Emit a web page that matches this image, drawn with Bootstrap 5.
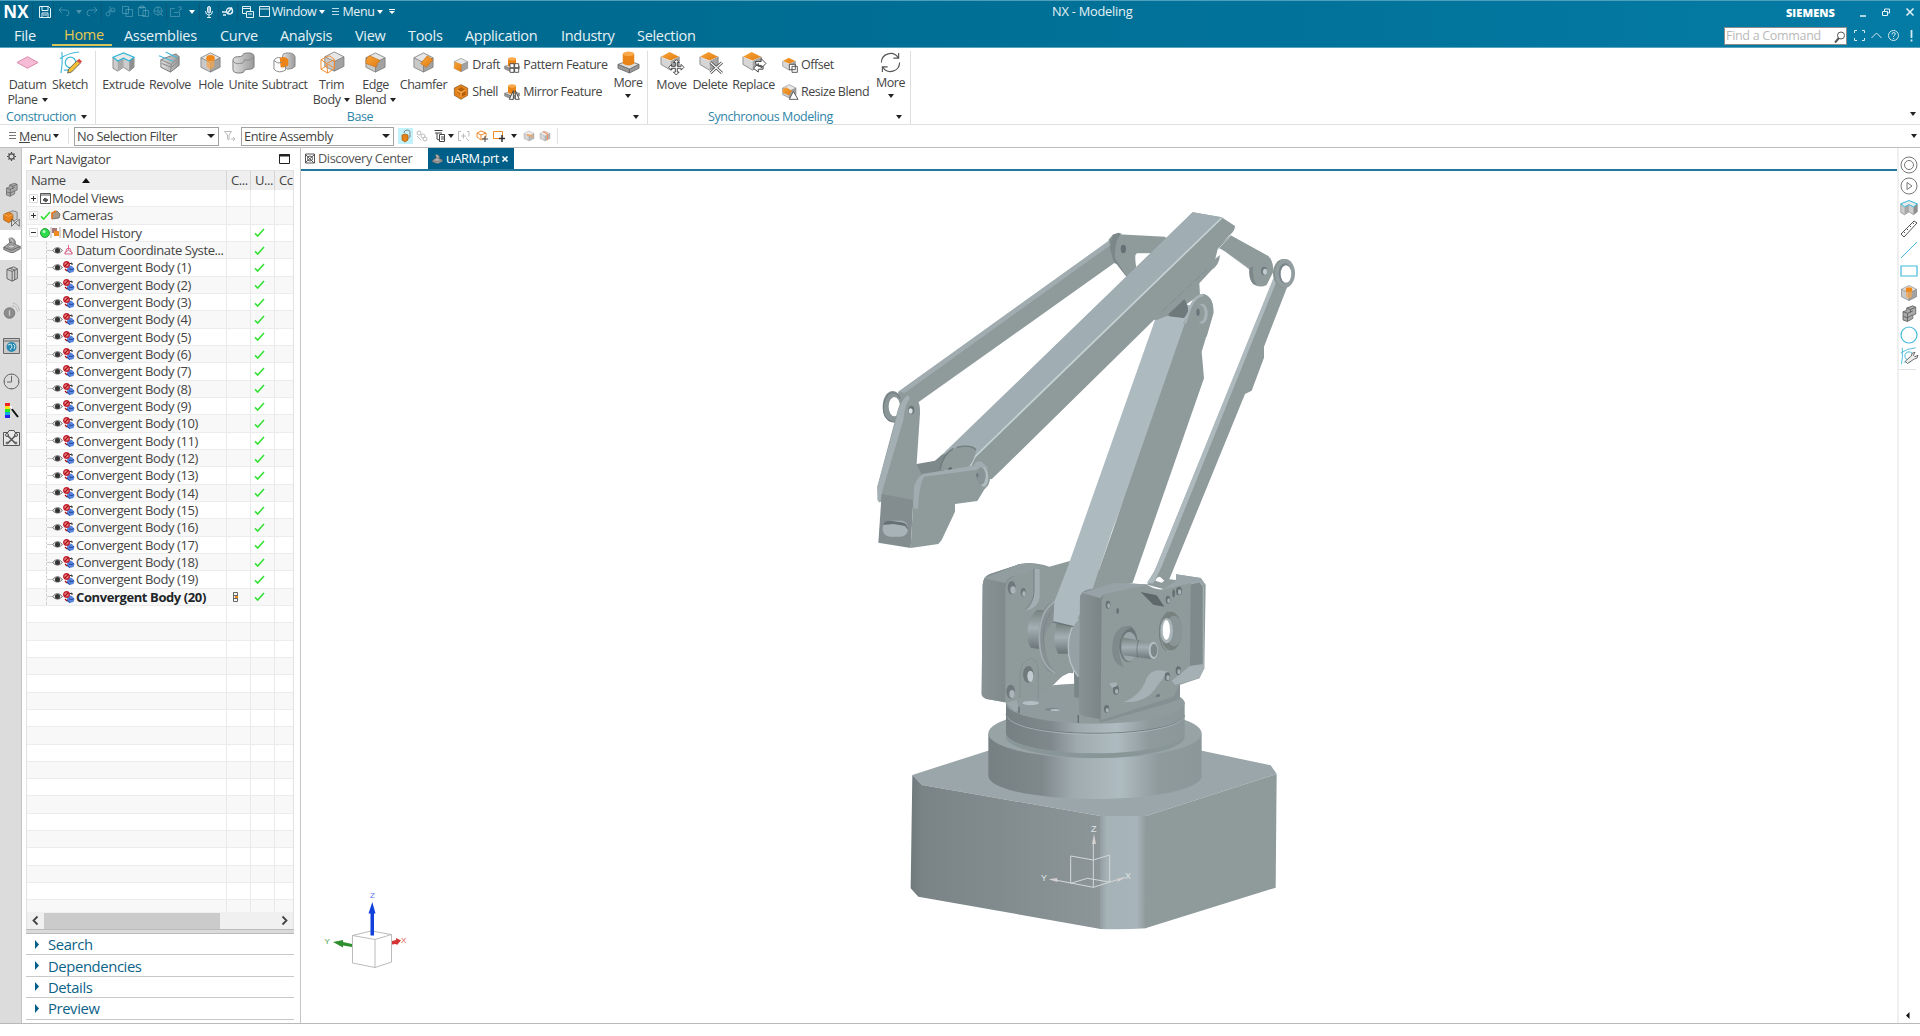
<!DOCTYPE html>
<html lang="en">
<head>
<meta charset="utf-8">
<title>NX - Modeling</title>
<link href="https://cdn.jsdelivr.net/npm/bootstrap@5.3.0/dist/css/bootstrap.min.css" rel="stylesheet">
<style>
html,body{height:100%}
body{font-family:"Open Sans","Noto Sans",sans-serif;font-size:12.5px;letter-spacing:-.42px;line-height:15px;color:#444;background:#fff;overflow:hidden}
svg{display:block;flex:none;overflow:visible}
.nowrap{white-space:nowrap}
.dd{width:0;height:0;border:3px solid transparent;border-top:4px solid #222;border-bottom:0;flex:none}
.titlebar .dd{border-top-color:#fff}
.topzone{height:48px;background:linear-gradient(90deg,#00658b,#006e94 45%,#047ba5);border-top:1px solid #4d9fbc;border-bottom:1px solid #5ba4bd;color:#e6f2f6}
.titlebar{height:21px}
.quick{display:grid;grid-template-columns:33px 21px 20px 9px 19px 17px 16px 16px 16px 18px 15px 19px 19px 19px 15px 44px 12px 15px 31px 12px 12px;height:21px;align-items:center;justify-items:center}
.quick .edge{border-right:1px solid #0b5a7b}
.quick>*{height:18px;width:100%;display:flex;align-items:center;justify-content:center}
.quick>.faded>*{opacity:.3}
.brand{font:bold 17px/18px "Open Sans",sans-serif;color:#fff;letter-spacing:.2px}
.wtitle{width:760px;padding-left:654px;font-size:12.8px;letter-spacing:-.22px}
.siemens{font:800 11px/14px "Open Sans",sans-serif;letter-spacing:.1px;color:#fff;margin-right:25px;padding-top:2px}
.ribtabs{height:25px;padding-top:2px;font-size:14.5px;line-height:23px;letter-spacing:-.3px;padding-left:2px}
.ribtabs a{color:#e6f2f6;text-decoration:none;padding-left:12px;height:22px;white-space:nowrap}
.ribtabs a.current{color:#e8c94f;border-bottom:2px solid #d9c55c;line-height:22px}
.t50{width:50px}.t60{width:60px}.t96{width:96px}.t75{width:75px}.t53{width:53px}.t57{width:57px}.t76{width:76px}
.finder{width:123px;height:18px;background:#fff;border:1px solid #8d8d8d;color:#b9b9b9;padding:0 1px;line-height:15px;font-size:12.5px;letter-spacing:-.3px;white-space:nowrap}
.ribbon{height:77px;border-bottom:1px solid #e0e0e0}
.rgroup{height:73px;margin-top:3px;border-right:1px solid #dedede}
.g1{width:96px;padding-left:6px}.g2{width:552px;padding-left:5px}.g3{width:263px;padding-left:5px}
.gfoot{height:17px;color:#2f85a8;line-height:16px}
.gbody{height:57px}
.big{display:flex;flex-direction:column;align-items:center;text-align:center;white-space:nowrap;line-height:15px}
.big svg{width:23px;height:23px;margin-bottom:3px}
.big.more svg{margin-bottom:1px}
.w31{width:31px}.w34{width:34px}.w37{width:37px}.w38{width:38px}.w40{width:40px}.w42{width:42px}.w43{width:43px}.w45{width:45px}.w46{width:46px}.w47{width:47px}.w48{width:48px}.w50{width:50px}.w52{width:52px}
.mini{display:flex;align-items:center;height:27px;gap:3px;white-space:nowrap;letter-spacing:-.45px}
.mini svg{width:16px;height:16px}
.c1{width:52px;margin-left:5px}.c2{width:105px;margin-left:-1px}.c3{width:91px;margin-left:5px;margin-right:-1px}
.basecap{padding-right:14px}.synccap{padding-right:8px}
.selbar{height:23px;border-bottom:1px solid #bdbdbd;display:grid;grid-template-columns:5px 15px 30px 12px 12px 145px 22px 153px 4px 15px 18px 17px 6px 20px 17px 16px 13px 17px 16px 5px 1fr 13px;align-items:center;justify-items:center}
.combo{border:1px solid #a2a2a2;height:19px;width:100%;display:flex;align-items:center;justify-content:space-between;padding:0 3px 0 2px;line-height:16px;font-size:12.8px}
.combo .dd{border-width:4px 4px 0}
.work{height:876px;border-bottom:1px solid #b9b9b9}
.rail{width:22px;background:#dcdcdc;border-right:1px solid #c4c4c4;flex:none}
.rail>div{display:flex;align-items:center;justify-content:center;padding-left:2px}
.h17{height:17px}.h41{height:41px}.h30{height:30px}.h28{height:28px}.h46{height:46px}.h24{height:24px}.h13{height:13px}.h42{height:42px}
.navpane{width:279px;border-right:1px solid #c6c6c6;padding-left:4px;flex:none}
.navhead{height:22px;font-size:13px;padding-left:3px;width:268px}
.treebox{width:268px;border:1px solid #e2e2e2;border-bottom:0}
.trow,.thead2{display:grid;grid-template-columns:200px 24px 24px 1fr}
.thead2{height:19px;background:#efefef;line-height:19px;font-size:13px}
.thead2>*{border-right:1px solid #d6d6d6;padding-left:4px;white-space:nowrap;overflow:hidden}
.treescroll{height:722px;overflow:hidden}
.trow{height:17.333px;border-bottom:1px solid #ececec;line-height:16px;font-size:13px;letter-spacing:-.4px}
.trow:nth-child(even){background:#f8f8f8}
.trow>*{border-right:1px solid #e9e9e9;display:flex;align-items:center;justify-content:center;white-space:nowrap;overflow:hidden;padding-right:6px}
.trow>:last-child,.thead2>:last-child{border-right:0}
.trow>.nm{justify-content:flex-start;padding-right:0}
.nm.lv1{padding-left:2px}
.nm.lv2{margin-left:19px;border-left:1px dashed #d0d0d0}
.gap3{margin-right:3px}.gap2{margin-right:2px}.gap1{margin-right:1px}
.bar{height:17px;background:#f0f0f0}
.thumb{width:176px;height:16px;background:#cbcbcb}
.splitter{height:5px;width:268px;background:#dadada;border-top:1px solid #bbb;border-bottom:1px solid #bbb}
.fold{width:268px;height:21.4px;border-bottom:1px solid #c9c9c9;color:#0b6388;font-size:14.8px;letter-spacing:-.38px;padding-left:9px;line-height:20px}
.fold svg{margin-right:9px}
.stage{width:1596px;flex:none}
.doctabs{height:23px;border-bottom:2px solid #24789c;color:#555;font-size:12.8px}
.dt1{width:127px;padding-left:4px}.dt2{width:86px;background:#005f88;color:#fff;padding:0 4px;height:21px}
.dt1,.dt2{gap:3px}
.tools{width:23px;border-left:2px solid #f0f0f0;flex:none}
.tools svg{width:18px;height:18px;margin:0 0 3.25px 1px}
</style>
</head>
<body>
<svg width="0" height="0" class="position-absolute">
<defs>
<linearGradient id="gm" x1="0" x2="1"><stop offset="0" stop-color="#dedede"/><stop offset="1" stop-color="#9a9a9a"/></linearGradient>
<linearGradient id="or" x1="0" y1="0" x2="1" y2="1"><stop offset="0" stop-color="#f9a53a"/><stop offset="1" stop-color="#e07c12"/></linearGradient>
<symbol id="cube" viewBox="0 0 24 24"><path d="M12 2 22 7 12 12 2 7z" fill="#e6e6e6"/><path d="M2 7 12 12V22L2 17z" fill="#c9c9c9"/><path d="M22 7 12 12V22l10-5z" fill="#a2a2a2"/><path d="M12 2 22 7V17L12 22 2 17V7zM2 7l10 5 10-5M12 12v10" fill="none" stroke="#777" stroke-width=".8"/></symbol>
<symbol id="ext" viewBox="0 0 24 24"><path d="M1 7v11l5 3 6-4 6 4 5-4V7z" fill="#cdcdcd" stroke="#777" stroke-width=".8"/><path d="M6 10v11l6-4V8z" fill="#a9a9a9"/><path d="M18 10v11l5-4V7z" fill="#8f8f8f"/><path d="M1 6.500 12 2l11 4.500-5 4-6-3-6 3z" fill="#e9e9e9" stroke="#2fb6d6" stroke-width="1.300"/></symbol>
<symbol id="hole" viewBox="0 0 24 24"><use href="#cube"/><path d="M8 7.500v9l4 3 4-3v-9z" fill="#f2a553" opacity=".75"/><ellipse cx="12" cy="7.500" rx="4.500" ry="3.200" fill="#ef8a1a"/></symbol>
<symbol id="otop" viewBox="0 0 24 24"><path d="M10 1 20 6 11 10 1 6z" fill="url(#or)"/><path d="M1 6 11 10.500V20L1 14z" fill="#d6d6d6"/><path d="M20 6 11 10.500V20l9-5z" fill="#a5a5a5"/><path d="M1 6v8l10 6 9-5V6" fill="none" stroke="#777" stroke-width=".8"/></symbol>
<symbol id="part" viewBox="0 0 24 24"><path d="M9 4l8-3 4 2v9l-4 2v4l-7 4-6-2V9l5-2z" fill="#aaa" stroke="#555"/><path d="M4 9l6 2 7-3M10 11v11M9 4l5 2 7-3M14 6v4M4 15l6 2 7-4" fill="none" stroke="#555"/></symbol>
<symbol id="eye" viewBox="0 0 12 10"><path d="M.5 5Q6-1.500 11.500 5 6 11 .5 5z" fill="#eee" stroke="#555" stroke-width=".9"/><circle cx="6" cy="5" r="2.800" fill="#333"/></symbol>
<symbol id="body" viewBox="0 0 12 12"><path d="M5 4l4 1 2.500 3-1 3-4 1-3-2z" fill="#5b86de"/><path d="M6 8l3 .5 2-1M4 9l3 2.500" stroke="#24479b" fill="none"/><path d="M6 3l3-1v2" stroke="#222" fill="none"/><circle cx="3.500" cy="3.500" r="2.800" fill="#e88" stroke="#c22333" stroke-width="1.400"/><path d="M1.500 5.500l4-4M2 8l2 2" stroke="#a11" stroke-width="1.200"/></symbol>
<symbol id="tick" viewBox="0 0 12 10"><path d="M1 6l3 3L11 1" fill="none" stroke="#35e035" stroke-width="1.700"/></symbol>
<symbol id="clam" viewBox="0 0 24 24"><path d="M1 15 9 9 8 3q5-2 8 3 1 3 0 5l7 3v3l-9 5h-4L1 18z" fill="#a3a3a3" stroke="#555"/><path d="M1 15l10 4 12-5M9 9q3-2 5 0t2 2" stroke="#555" fill="none"/><path d="M8 3q4 0 5 6" stroke="#ddd" fill="none"/><ellipse cx="11" cy="14" rx="4" ry="2" fill="#ccc" stroke="#666" stroke-width=".7"/></symbol>
<symbol id="sk" viewBox="0 0 24 24"><path d="M3 1q1 12-1 22M1 8Q9 2 21 1M5 20h9" fill="none" stroke="#43b9da" stroke-width="1.200"/><circle cx="12" cy="12" r="5.500" fill="none" stroke="#43b9da" stroke-width="1.300"/></symbol>
<symbol id="boss" viewBox="0 0 24 24"><path d="M1 14l11-4 11 4-10 5z" fill="#ddd" stroke="#666" stroke-width=".8"/><path d="M1 14v4l12 5v-4zM23 14v4l-10 5v-4z" fill="#999" stroke="#666" stroke-width=".8"/><path d="M6 3v10q6 4 12 0V3z" fill="#e98418"/><ellipse cx="12" cy="3" rx="6" ry="2.500" fill="#f9a94a"/></symbol>
</defs>
</svg>

<header class="topzone">
  <div class="titlebar d-flex align-items-center">
    <div class="quick">
      <div class="edge brand">NX</div>
      <div class="edge ps-1"><svg width="12" height="12" viewBox="0 0 12 12" fill="none" stroke="#e6f2f6"><path d="M.5.5h9l2 2v9H.5zM3 .5v4h6v-4M3 11V7h6v4M4 9h4"/></svg></div>
      <div class="faded"><svg width="12" height="11" viewBox="0 0 12 11" fill="none" stroke="#bfe3ef"><path d="M4 1 1 4l3 3M1 4h7q3 0 3 3t-3 3"/></svg></div>
      <div class="faded"><i class="dd"></i></div>
      <div class="edge faded"><svg width="12" height="11" viewBox="0 0 12 11" fill="none" stroke="#bfe3ef"><path d="M8 1l3 3-3 3M11 4H4Q1 4 1 7t3 3"/></svg></div>
      <div class="faded"><svg width="11" height="11" viewBox="0 0 11 11" fill="none" stroke="#bfe3ef"><path d="M5 0v7M10 5H3"/><circle cx="3" cy="8" r="2"/><circle cx="8" cy="4" r="2"/></svg></div>
      <div class="faded"><svg width="11" height="11" viewBox="0 0 11 11" fill="none" stroke="#bfe3ef"><path d="M.5.5h6v7h-6zM4 3.500h6.500v7H4z"/></svg></div>
      <div class="faded"><svg width="11" height="11" viewBox="0 0 11 11" fill="none" stroke="#bfe3ef"><path d="M.5 1.500h7v8h-7zM2 0h4v2H2zM5 4.500h5.500v6H5z"/></svg></div>
      <div class="edge faded"><svg width="11" height="11" viewBox="0 0 11 11" fill="none" stroke="#bfe3ef"><circle cx="5" cy="5" r="4"/><path d="M5 0v10M0 5h10M6 6l4 4"/></svg></div>
      <div class="faded"><svg width="12" height="11" viewBox="0 0 12 11" fill="none" stroke="#bfe3ef"><path d="M5 2.500H.5v8h9V6M4 6.500h4l3-4M8 1h3v3"/></svg></div>
      <div class="edge"><i class="dd"></i></div>
      <div class="edge"><svg width="8" height="12" viewBox="0 0 8 12" fill="none" stroke="#e6f2f6"><rect x="2.500" y=".5" width="3" height="6.500" rx="1.500" fill="#9bd"/><path d="M.5 5q0 4 3.500 4t3.500-4M4 9v2.500M2 11.500h4"/></svg></div>
      <div class="edge"><svg width="12" height="9" viewBox="0 0 12 9" fill="none" stroke="#e6f2f6" stroke-width="1.300"><path d="M0 5h5M1 8h3"/><circle cx="7.500" cy="4" r="3"/><path d="M5.500 6 10 .5M9 6.500l2-2"/></svg></div>
      <div><svg width="12" height="12" viewBox="0 0 12 12" fill="none" stroke="#e6f2f6"><path d="M.5.5h8v7h-8zM.5 2.500h8"/><path d="M4.500 5.500h7v6h-7zM6 8h4" fill="#006990"/></svg></div>
      <div><svg width="11" height="11" viewBox="0 0 11 11" fill="none" stroke="#e6f2f6"><path d="M.5.5h10v10H.5zM.5 3h10"/></svg></div>
      <div>Window</div><div><i class="dd"></i></div>
      <div><svg width="7" height="8" viewBox="0 0 7 8" stroke="#b9dbe6"><path d="M0 .5h7M0 3.500h7M0 6.500h7"/></svg></div>
      <div>Menu</div><div><i class="dd"></i></div>
      <div><svg width="6" height="6" viewBox="0 0 6 6"><path d="M0 .5h6" stroke="#fff"/><path d="M0 2h6L3 5z" fill="#fff"/></svg></div>
    </div>
    <div class="wtitle nowrap">NX - Modeling</div>
    <div class="ms-auto d-flex align-items-center">
      <span class="siemens">SIEMENS</span>
      <svg width="60" height="12" viewBox="0 0 60 12" fill="none" stroke="#e8f4f8"><path d="M0 10h6" stroke-width="1.500"/><path d="M22.500 5.500h5v4h-5zM24.500 5V3h5v4H28"/><path d="M46.500 2.500l7 7M53.500 2.500l-7 7" stroke-width="1.500"/></svg>
    </div>
  </div>
  <nav class="ribtabs d-flex">
    <a class="t50">File</a><a class="t60 current">Home</a><a class="t96">Assemblies</a><a class="t60">Curve</a><a class="t75">Analysis</a><a class="t53">View</a><a class="t57">Tools</a><a class="t96">Application</a><a class="t76">Industry</a><a>Selection</a>
    <div class="ms-auto d-flex align-items-center">
      <div class="finder d-flex justify-content-between me-2"><span>Find a Command</span><svg width="11" height="12" viewBox="0 0 11 12" fill="none" stroke="#555" class="mt-1"><circle cx="7" cy="3.500" r="3.500"/><path d="M5 6 1 10.500" stroke-width="2"/></svg></div>
      <svg width="65" height="13" viewBox="0 0 65 13" fill="none" stroke="#d5eaf1"><path d="M-.5 4V1.500H2M7 1.500h2.500V4M9.500 9v2.500H7M2 11.500H-.5V9M16.500 9l5-5 5 5"/><circle cx="38.500" cy="6.500" r="5"/><path d="M37 5.500q0-2 1.700-2T40.200 5q0 1-1.600 2v1M38.600 9v1"/><path d="M56.500 1v8M56.500 10.500v2" stroke-width="1.800"/></svg>
    </div>
  </nav>
</header>

<section class="ribbon d-flex">
  <div class="rgroup g1">
    <div class="gbody d-flex">
      <div class="big w43"><svg viewBox="0 0 24 24"><path d="M1 12 12 6l11 6-11 6z" fill="#f6bcd6" stroke="#d887aa"/></svg>Datum<span class="d-flex align-items-center gap-1">Plane<i class="dd"></i></span></div>
      <div class="big w42"><svg viewBox="0 0 24 24"><use href="#sk"/><path d="M9 23l1-4 9-9 3 3-9 9z" fill="#f3c137" stroke="#444" stroke-width=".8"/><path d="M19 10l2-2 3 3-2 2z" fill="#d44"/></svg>Sketch</div>
    </div>
    <div class="gfoot d-flex align-items-center justify-content-between pe-2"><span>Construction</span><i class="dd"></i></div>
  </div>
  <div class="rgroup g2">
    <div class="gbody d-flex">
      <div class="big w45"><svg viewBox="0 0 24 24"><use href="#ext"/></svg>Extrude</div>
      <div class="big w48"><svg viewBox="0 0 24 24"><path d="M3 9 19 3l3 3v9l-9 7-10-5z" fill="url(#gm)" stroke="#777"/><path d="M3 9l11 5 8-8M14 14l-1 8M4 13l10 4 8-7" stroke="#888" fill="none"/><path d="M1 5l15 6M8 1l12 6" stroke="#43b9da" stroke-width="1.200"/></svg>Revolve</div>
      <div class="big w34"><svg viewBox="0 0 24 24"><use href="#hole"/></svg>Hole</div>
      <div class="big w31"><svg viewBox="0 0 24 24"><path d="M1 10q0-4 5-4 3 0 5-1 0-3 6-3t6 4v10q0 3-5 3-4 0-5 1 0 3-6 3t-6-4z" fill="url(#gm)" stroke="#777"/><path d="M1 10q2 4 7 3 5 0 5-4 6 2 10-3" fill="none" stroke="#888"/></svg>Unite</div>
      <div class="big w52"><svg viewBox="0 0 24 24"><path d="M10 5q0-3 6-3t7 4v10q-2 3-8 3l-5-5z" fill="url(#gm)" stroke="#888"/><path d="M7 7q7-2 9 2v6q-4 3-8 2z" fill="#ec8418"/><path d="M1 10v9q5 5 12 1v-5M1 10q2-4 7-3M1 10q4 4 8 2" fill="none" stroke="#888"/></svg>Subtract</div>
      <div class="big w42"><svg viewBox="0 0 24 24"><use href="#cube" x="3" y="-1"/><path d="M1 9l9-4 5 4-8 4zM1 9v10l7 4 7-5V9M7 13l1 10M1 19l8-5 6 4" fill="none" stroke="#f08a2c"/></svg>Trim<span class="d-flex align-items-center gap-1">Body<i class="dd"></i></span></div>
      <div class="big w46"><svg viewBox="0 0 24 24"><use href="#cube"/><path d="M2 10q1-4 4-5l11 5q-4 2-4 7L2 13z" fill="url(#or)" stroke="#c06a10" stroke-width=".6"/></svg>Edge<span class="d-flex align-items-center gap-1">Blend<i class="dd"></i></span></div>
      <div class="big w50"><svg viewBox="0 0 24 24"><use href="#cube"/><path d="M16 5l6 4-7 8-6-4z" fill="url(#or)" stroke="#c06a10" stroke-width=".6"/></svg>Chamfer</div>
      <div class="c1">
        <div class="mini"><svg viewBox="0 0 24 24"><use href="#cube"/><path d="M3 7l10 4-1 11L1 17z" fill="url(#or)"/></svg>Draft</div>
        <div class="mini"><svg viewBox="0 0 24 24"><path d="M12 1l10 5v11l-10 6L2 17V6z" fill="#e58219" stroke="#7a5020"/><path d="M6 9l6-4 7 4v7l-7 3z" fill="#b55f0c"/><path d="M6 9l6 4 7-4M12 13v6" stroke="#f9b04f" fill="none" stroke-width="2"/></svg>Shell</div>
      </div>
      <div class="c2">
        <div class="mini"><svg viewBox="0 0 24 24"><use href="#boss"/><path d="M9 10h6v6H9zM16 10h6v6h-6zM9 17h6v6H9zM16 17h6v6h-6z" fill="#fff" stroke="#444" stroke-width="1.300"/></svg>Pattern Feature</div>
        <div class="mini"><svg viewBox="0 0 24 24"><use href="#boss"/><path d="M14 10v13H8zM17 10v13h6z" fill="#fff" stroke="#444" stroke-width="1.400"/></svg>Mirror Feature</div>
      </div>
      <div class="big more w38"><svg viewBox="0 0 24 24"><use href="#boss"/></svg>More<i class="dd mt-1"></i></div>
    </div>
    <div class="gfoot d-flex align-items-center"><span class="flex-fill text-center basecap">Base</span><i class="dd me-2"></i></div>
  </div>
  <div class="rgroup g3">
    <div class="gbody d-flex">
      <div class="big w37"><svg viewBox="0 0 24 24"><use href="#otop"/><path d="M17 9l3 3h-2v4h4v-2l3 3-3 3v-2h-4v4h2l-3 3-3-3h2v-4h-4v2l-3-3 3-3v2h4v-4h-2z" fill="#fff" stroke="#444"/></svg>Move</div>
      <div class="big w40"><svg viewBox="0 0 24 24"><use href="#otop"/><path d="M12 12l12 11M24 12 12 23" stroke="#444" stroke-width="3"/><path d="M12 12l12 11M24 12 12 23" stroke="#fff" stroke-width="1.200"/></svg>Delete</div>
      <div class="big w47"><svg viewBox="0 0 24 24"><use href="#otop"/><path d="M14 11h6V8l5 5-5 5v-3h-5zM22 16v3h-5v3l-5-4 5-5v3z" fill="#fff" stroke="#444"/></svg>Replace</div>
      <div class="c3">
        <div class="mini"><svg viewBox="0 0 24 24"><use href="#otop"/><path d="M11 11h9v8h-9zM15 14h8v9h-8z" fill="#fff" stroke="#444" stroke-width="1.300"/></svg>Offset</div>
        <div class="mini"><svg viewBox="0 0 24 24"><use href="#cube" x="-1" y="-1"/><path d="M1 8l5-3 9 5-4 7L1 13z" fill="url(#or)"/><path d="M17 11l7 12H11z" fill="#fff" stroke="#444" stroke-width="1.300"/></svg>Resize Blend</div>
      </div>
      <div class="big more w37"><svg viewBox="0 0 24 24" fill="none" stroke="#555" stroke-width="1.200"><path d="M2.500 12A9.500 9.500 0 0 1 20 7M21.500 12A9.500 9.500 0 0 1 4 17M20.500 2v5.500H15M3.500 22v-5.500H9"/></svg>More<i class="dd mt-1"></i></div>
    </div>
    <div class="gfoot d-flex align-items-center"><span class="flex-fill text-center synccap">Synchronous Modeling</span><i class="dd me-2"></i></div>
  </div>
  <div class="ms-auto d-flex align-items-end pb-1 pe-1"><i class="dd mb-1"></i></div>
</section>

<section class="selbar">
  <span></span>
  <svg width="7" height="8" viewBox="0 0 7 8" stroke="#777"><path d="M0 .5h7M0 3.500h7M0 6.500h7"/></svg>
  <span><u>M</u>enu</span><i class="dd"></i><span class="border-start h-75"></span>
  <div class="combo">No Selection Filter<i class="dd"></i></div>
  <svg width="12" height="11" viewBox="0 0 12 11" fill="none" stroke="#bbb"><path d="M.5.5h7L5 4v5L3.500 8V4zM7 8h4M9 6l2 2-2 2"/></svg>
  <div class="combo">Entire Assembly<i class="dd"></i></div>
  <span></span>
  <div class="bg-info bg-opacity-25 p-0"><svg width="15" height="16" viewBox="0 0 15 16"><path d="M4 7l3-1 3 1v5l-3 2-3-2z" fill="#e58219" stroke="#a55a0c" stroke-width=".7"/><path d="M6 5q0-3 3-3t3 2v5l-2 1" fill="none" stroke="#888"/></svg></div>
  <svg width="12" height="12" viewBox="0 0 12 12" fill="none" stroke="#bbb"><circle cx="3" cy="3" r="2"/><circle cx="7" cy="6" r="2"/><circle cx="9" cy="9" r="2"/><path d="M1 6l4 4"/></svg>
  <svg width="12" height="12" viewBox="0 0 12 12" fill="none" stroke="#444"><path d="M.5.5h8M1 3h7M3 3v6l2 1M5.500 4.500h5v7h-5zM7 7h3M7 9h3"/></svg>
  <i class="dd"></i>
  <svg width="12" height="11" viewBox="0 0 12 11" fill="none" stroke="#bbb"><path d="M3 .5H.5v9H3M9 .5h2v5M3 5h5M5.500 2.500v5M8 7l3 3"/></svg>
  <svg width="13" height="13" viewBox="0 0 13 13" fill="none" stroke="#ef8a2c"><path d="M1 3l4-2 5 2v4l-5 3-4-3zM1 3l4 2 5-2M5 5v4"/><path d="M9 6v6M6 9h6" stroke="#444"/></svg>
  <svg width="13" height="13" viewBox="0 0 13 13" fill="none" stroke="#ef8a2c"><path d="M.5 1.500h9v7h-9z"/><path d="M9 5v7M6 8.500h6" stroke="#333" stroke-width="1.500"/></svg>
  <i class="dd"></i>
  <svg width="12" height="12" viewBox="0 0 24 24" opacity=".75"><use href="#cube"/><path d="M8 9l12 4" stroke="#ef8a2c" stroke-width="3"/></svg>
  <svg width="12" height="12" viewBox="0 0 24 24" opacity=".75"><use href="#cube"/><path d="M8 3l9 5v12" stroke="#ef6a2c" fill="none" stroke-width="2.500"/></svg>
  <span class="border-end h-75 w-100"></span><span></span><i class="dd"></i>
</section>

<main class="work d-flex">
  <aside class="rail">
    <div class="h17"><svg width="9" height="9" viewBox="0 0 12 12" fill="none" stroke="#444"><circle cx="6" cy="6" r="3.500" stroke-width="1.400"/><path d="M6 0v2M6 10v2M0 6h2M10 6h2M2 2l1 1M9 9l1 1M2 10l1-1M9 3l1-1" stroke-width="1.500"/></svg></div>
    <div class="h41 pt-2"><svg width="15" height="16" viewBox="0 0 24 24"><use href="#part"/></svg></div>
    <div class="h24"><svg width="17" height="17" viewBox="0 0 24 24"><path d="M9 3l5-2 6 2v10l-6 3z" fill="#ccc" stroke="#666"/><path d="M1 6l7-3 6 3v8l-6 4-7-4z" fill="#e9821a" stroke="#9a5a14"/><path d="M1 6l7 3 6-3" stroke="#f9b968" fill="none"/><path d="M12 13v10l11-10v10z" fill="#ddd" stroke="#444"/></svg></div>
    <div class="bg-white h30"><svg width="18" height="18" viewBox="0 0 24 24"><use href="#clam"/></svg></div>
    <div class="h28"><svg width="13" height="16" viewBox="0 0 20 24" fill="#ccc" stroke="#555" stroke-width="1.300"><path d="M3 5l10-4 6 3v15l-8 4-8-4zM3 5l8 3 8-4M11 8v15M7 3l8 3v15"/></svg></div>
    <div class="h46"><svg width="17" height="16" viewBox="0 0 24 24"><circle cx="9" cy="15" r="8" fill="#8b8b8b" stroke="#666"/><path d="M9 11v8" stroke="#ccc" stroke-width="2"/><path d="M13 4q7 1 8 9M14 0q9 2 10 12" fill="none" stroke="#aaa"/></svg></div>
    <div class="h24"><svg width="17" height="16" viewBox="0 0 17 16"><path d="M.5.5h16v15H.5z" fill="#c9c9c9" stroke="#666"/><path d="M1 3h15" stroke="#666"/><circle cx="8.500" cy="9" r="5" fill="#2a89b0"/><path d="M5 7l3-1 1 3-2 3M10 6l2 2-1 3" stroke="#bfe3ef" fill="none"/></svg></div>
    <div class="h46"><svg width="17" height="17" viewBox="0 0 17 17" fill="none" stroke="#666"><circle cx="8.500" cy="8.500" r="7.500"/><path d="M8.500 3v6H4M8.500 1v1M8.500 15v1M1 8.500h1M15 8.500h1"/></svg></div>
    <div class="h13"><svg width="14" height="15" viewBox="0 0 14 15"><path d="M0 0h5v3H0z" fill="#e22"/><path d="M0 3h5v3H0z" fill="#f8e01c"/><path d="M0 6h5v3H0z" fill="#2e2"/><path d="M0 9h5v3H0z" fill="#1ad"/><path d="M0 12h5v3H0z" fill="#22e"/><path d="M6 5l7 9" stroke="#111" stroke-width="2"/><path d="M5 3l2 3" stroke="#fff" stroke-width="2"/></svg></div>
    <div class="h42"><svg width="17" height="16" viewBox="0 0 17 16" fill="none" stroke="#555"><path d="M.5 2.500H5L6 .5h5l1 2h4.500v13H.5z" fill="#e8e8e8"/><path d="M4.500 5.500l8 8M12.500 5.500l-8 8" stroke-width="1.600"/><circle cx="4" cy="5" r="1.500"/><circle cx="13" cy="5" r="1.500"/><circle cx="4" cy="13" r="1"/><circle cx="13" cy="13" r="1"/></svg></div>
  </aside>

  <section class="navpane">
    <div class="navhead d-flex align-items-center justify-content-between"><span>Part Navigator</span><svg width="11" height="10" viewBox="0 0 11 10" fill="none" stroke="#222" class="me-1"><path d="M.5.5h10v9H.5z"/><path d="M0 1.500h11" stroke-width="2"/></svg></div>
    <div class="treebox">
      <div class="thead2"><div class="d-flex align-items-center">Name<svg width="8" height="5" viewBox="0 0 8 5" class="ms-3"><path d="M4 0l4 5H0z" fill="#111"/></svg></div><div>C...</div><div>U...</div><div>Cc</div></div>
      <div class="treescroll" id="tree"></div>
      <div class="bar d-flex align-items-center justify-content-between px-1">
        <svg width="9" height="9" viewBox="0 0 9 9" fill="none" stroke="#444" stroke-width="1.800"><path d="M6.500.5l-4 4 4 4"/></svg>
        <div class="thumb me-auto ms-1"></div>
        <svg width="9" height="9" viewBox="0 0 9 9" fill="none" stroke="#444" stroke-width="1.800"><path d="M2.500.5l4 4-4 4"/></svg>
      </div>
    </div>
    <div class="splitter"></div>
    <div class="fold d-flex align-items-center"><svg width="4" height="9" viewBox="0 0 4 9"><path d="M0 0l4 4.500L0 9z" fill="#005f88"/></svg>Search</div>
    <div class="fold d-flex align-items-center"><svg width="4" height="9" viewBox="0 0 4 9"><path d="M0 0l4 4.500L0 9z" fill="#005f88"/></svg>Dependencies</div>
    <div class="fold d-flex align-items-center"><svg width="4" height="9" viewBox="0 0 4 9"><path d="M0 0l4 4.500L0 9z" fill="#005f88"/></svg>Details</div>
    <div class="fold d-flex align-items-center"><svg width="4" height="9" viewBox="0 0 4 9"><path d="M0 0l4 4.500L0 9z" fill="#005f88"/></svg>Preview</div>
  </section>

  <section class="stage">
    <div class="doctabs d-flex">
      <div class="dt1 d-flex align-items-center"><svg width="10" height="11" viewBox="0 0 10 11" fill="none" stroke="#555"><path d="M.5 1h9v9h-9zM1 2l8 8M9 2 1 9"/><circle cx="5" cy="5.500" r="2.500"/></svg>Discovery Center</div>
      <div class="dt2 d-flex align-items-center"><svg width="11" height="12" viewBox="0 0 24 24"><use href="#clam"/></svg>uARM.prt<svg width="6" height="6" viewBox="0 0 6 6" stroke="#fff" stroke-width="1.700"><path d="M.5.5l5 5M5.500.5l-5 5"/></svg></div>
    </div>
    <svg width="1596" height="852" viewBox="301 171 1596 852">
      <defs>
        <linearGradient id="faceL"><stop offset="0" stop-color="#6f797b"/><stop offset=".06" stop-color="#7a8486"/><stop offset="1" stop-color="#8c9699"/></linearGradient>
        <linearGradient id="faceM"><stop offset="0" stop-color="#939ea1"/><stop offset=".15" stop-color="#a5b2b7"/><stop offset=".8" stop-color="#a7b4b9"/><stop offset="1" stop-color="#8f9a9b"/></linearGradient>
        <linearGradient id="cyl"><stop offset="0" stop-color="#768083"/><stop offset=".25" stop-color="#7f898c"/><stop offset=".4" stop-color="#a0abaf"/><stop offset=".62" stop-color="#aebbc0"/><stop offset=".8" stop-color="#8f9a9c"/><stop offset="1" stop-color="#8c9799"/></linearGradient>
        <linearGradient id="side"><stop offset="0" stop-color="#889295"/><stop offset=".7" stop-color="#7b8587"/><stop offset="1" stop-color="#8f9a9b"/></linearGradient>
        <linearGradient id="vert" x2="0" y2="1"><stop offset="0" stop-color="#76817f"/><stop offset=".45" stop-color="#a3afb3"/><stop offset="1" stop-color="#6b7578"/></linearGradient>
      </defs>
      <g transform="translate(860 530) scale(.33333)" fill="#8f9a9b">
        <path d="M157 735 384 662H1026L1232 706 1250 732 858 858H722L186 765z" fill="#9aa6aa"/>
        <path d="M157 735 186 765 722 858V1197L175 1100 152 1075z" fill="url(#faceL)"/>
        <path d="M720 858H858V1195Q790 1200 720 1197z" fill="url(#faceM)"/>
        <path d="M858 858 1250 732 1247 1073 856 1195z"/>
        <path d="M385 612V738C385 777 528 807 705 807S1025 777 1025 738V612z" fill="url(#cyl)"/>
        <ellipse cx="705" cy="610" rx="320" ry="75" fill="#98a3a6"/>
        <path d="M438 522V608C438 642 558 670 706 670S974 642 974 608V515z" fill="url(#cyl)"/>
        <path d="M438 608C438 642 558 670 706 670S974 642 974 608v12C974 654 854 684 706 684S438 654 438 620z" fill="#829092" opacity=".7"/>
        <path d="M438 553C445 587 560 610 706 610S968 587 974 556" fill="none" stroke="#727d7f" stroke-width="3"/>
        <path d="M442 560C455 590 560 613 706 613S960 590 973 560" fill="none" stroke="#b4c0c4" stroke-width="2"/>
        <ellipse cx="706" cy="520" rx="268" ry="61" fill="#909b9d"/>
        <!-- rear plate -->
        <path d="M368 165Q370 138 390 132L480 102Q520 94 568 110L640 90 740 130 640 425Q610 430 583 462L560 482 540 490Q490 512 480 505L440 518 380 507Q364 502 365 490z"/>
        <path d="M368 165Q370 138 390 132L480 102 530 105 474 135Q438 142 436 175V516L380 507Q364 502 365 490z" fill="url(#side)"/>
        <path d="M372 145 480 102Q520 98 545 112L470 137Q440 140 437 160z" fill="#929da0"/>
        <path d="M522 117h17v85q-5 35-42 40 24-18 25-55z" fill="#a2aeb2"/><path d="M522 117v70q-2 30-25 50" stroke="#788285" fill="none" stroke-width="3"/>
        <path d="M585 462Q610 430 645 427V460z" fill="#fff"/>
        <path d="M480 505V440q0-48 35-56 20 10 20 45v80" stroke="#808b8d" fill="none" stroke-width="2"/>
        <g fill="#6f797b"><ellipse cx="455" cy="173" rx="12" ry="20"/><ellipse cx="490" cy="187" rx="8" ry="13"/><ellipse cx="452" cy="485" rx="13" ry="21"/><ellipse cx="505" cy="433" rx="16" ry="25"/></g>
        <g fill="#a9b5b9"><ellipse cx="459" cy="180" rx="8" ry="11"/><ellipse cx="492" cy="191" rx="5" ry="8"/><ellipse cx="456" cy="492" rx="8" ry="12"/><ellipse cx="511" cy="439" rx="9" ry="17" fill="#c0cccf"/></g>
        <ellipse cx="512" cy="519" rx="25" ry="6" fill="#b3bfc3"/><ellipse cx="577" cy="538" rx="22" ry="5" fill="#7c8688"/><ellipse cx="585" cy="540" rx="14" ry="3" fill="#b3bfc3"/>
        <path d="M440 518l30-8 8 30-14 5z" fill="#9ca8ab"/>
        <!-- pivot discs -->
        <path d="M555 240h-25q-26 25-28 62 0 42 12 52l30 4z" fill="url(#vert)"/>
        <ellipse cx="576" cy="322" rx="40" ry="106" fill="#879194"/>
        <path d="M583 216Q538 245 538 325T585 428" fill="none" stroke="#a0acb0" stroke-width="5"/>
        <path d="M597 222Q548 260 550 325T600 424" fill="none" stroke="#7c8789" stroke-width="3"/>
        <path d="M553 330Q560 275 600 270L640 300 640 430 588 426Q556 400 553 330z"/>
        <path d="M590 281h50v90h-46q-20-40-4-90z" fill="url(#vert)"/>
        <path d="M642 425h25v80l-24-3z" fill="#7b8688"/>
        <path d="M655 266Q628 290 625 345T655 440L680 430V266z" fill="#95a1a4"/>
        <path d="M655 266Q628 290 625 345T655 440" fill="none" stroke="#b6c2c6" stroke-width="4"/>
      </g>
      <g transform="translate(860 190) scale(.33333)" fill="#8f9a9b">
        <!-- right link -->
        <path d="M1243 265 1285 285 1278 300 1212 470 1212 503 1175 602 1155 612 928 1168 970 1172 930 1202 862 1184 885 1140z"/>
        <path d="M1240 265 1252 268 905 1130 880 1180 860 1180 885 1140z" fill="#adb9bd"/>
        <path d="M886 1172Q890 1160 900 1160L913 1172 905 1178z" fill="#fff"/>
        <ellipse cx="1271" cy="250" rx="32" ry="43" fill="#87928f"/><ellipse cx="1275" cy="250" rx="30" ry="43" fill="#929d9f"/><ellipse cx="1275" cy="250" rx="19" ry="30" fill="#78848a"/><ellipse cx="1278" cy="252" rx="16" ry="26" fill="#fff"/>
        <!-- lower arm -->
        <path d="M885 390 900 345 1000 345 1000 385 757 1020 697 1200 640 1310 580 1296 583 1235 620 1140z" fill="#adbbc0"/>
        <path d="M580 1296 640 1310" stroke="#69777a" stroke-width="4"/>
        <path d="M985 370Q997 315 1030 312 1062 320 1060 370L1025 485 1032 565 818 1178 740 1195 697 1205 717 1140z"/>
        <!-- elbow links -->
        <path d="M745 150 760 132 915 140 960 190H830Q822 205 830 235L800 262 770 222 752 215z"/>
        <path d="M826 195Q830 191 840 191H885L850 235 830 225z" fill="#fff"/>
        <path d="M748 165Q755 130 775 128L785 131Q764 145 765 205L800 260 770 222Q748 210 748 165z" fill="#7c878a"/>
        <ellipse cx="790" cy="177" rx="8" ry="13" fill="#667175"/>
        <path d="M1070 170 1112 136 1225 198Q1240 212 1240 245L1220 285Q1200 295 1180 283 1168 270 1168 235L1094 184z"/>
        <path d="M1094 184 1168 235 1180 229Q1175 260 1190 286 1165 280 1168 238z" fill="#7c878a"/>
        <ellipse cx="1212" cy="243" rx="9" ry="13" fill="#6f7b7e"/><ellipse cx="1215" cy="245" rx="6" ry="9" fill="#c0cdd0"/>
        <!-- upper link -->
        <path d="M115 605 745 155 762 220 175 637 110 660z"/>
        <path d="M115 605 745 153 752 165 135 608z" fill="#a0acb0"/>
        <!-- upper arm -->
        <path d="M950 300 1080 195Q1078 225 1055 240L1018 280 1020 314 990 335 915 388 885 390 870 380z"/>
        <path d="M260 785 998 67 1085 82 1125 108Q1125 122 1112 133L1075 170 1065 210 395 868 300 850z"/>
        <path d="M235 805 998 67 1085 82 345 800 300 815z" fill="#a0aeb3"/>
        <path d="M1085 84 345 800 330 830" fill="none" stroke="#c5d3d4" stroke-width="5"/>
        <path d="M1072 180 1112 137" stroke="#bdcaca" stroke-width="3"/>
        <path d="M905 365 1040 240" stroke="#7c8789" stroke-width="2" stroke-dasharray="25 8"/>
        <!-- elbow recess and pivot lug -->
        <path d="M925 373 973 328Q985 345 985 365L972 385 930 382z" fill="#6e797b"/>
        <path d="M885 392 920 378 975 385 985 372 990 400 880 405z" fill="#adbbc0"/>
        <path d="M970 400 985 365Q998 315 1030 312 1062 320 1060 370L1040 440z"/>
        <path d="M975 400 987 365Q1000 318 1030 315" fill="none" stroke="#a8b4b8" stroke-width="7"/>
        <ellipse cx="1026" cy="371" rx="17" ry="30" fill="#a6b3b7"/><ellipse cx="1019" cy="370" rx="15" ry="26"/><ellipse cx="1014" cy="367" rx="5" ry="11" fill="#69757a"/>
        <!-- wrist -->
        <ellipse cx="98" cy="650" rx="30" ry="47" fill="#8a9597"/><ellipse cx="103" cy="650" rx="17" ry="29" fill="#fff"/>
        <path d="M120 625Q110 600 85 612 65 640 72 670 78 695 107 697" fill="none" stroke="#6e797d" stroke-width="3"/>
        <path d="M170 822 225 812 245 795 265 788 250 860 160 870z" fill="#7e898c"/>
        <path d="M240 838Q250 790 290 772 335 762 348 780 345 810 325 832L270 845z"/>
        <path d="M240 838Q248 795 280 775M290 772Q335 762 348 780" fill="none" stroke="#707b7d" stroke-width="4"/>
        <ellipse cx="271" cy="838" rx="6" ry="6" fill="#5d686b"/>
        <path d="M112 665Q125 615 150 618 182 620 180 670L170 822 205 900 160 935 55 935 52 890z"/>
        <path d="M108 690Q122 625 145 616L150 625Q135 640 130 690L68 900 60 938 52 930V890z" fill="#a3afb3"/>
        <ellipse cx="154" cy="660" rx="9" ry="13" fill="#697578"/><ellipse cx="152" cy="663" rx="6" ry="8" fill="#dbe3e5"/>
        <path d="M65 912 160 930 152 1074 55 1058z" fill="#838d90"/>
        <path d="M160 930 178 860 350 830Q385 830 390 870L385 885Q370 900 363 915L352 933 285 942V965L245 1050 235 1062 152 1074z"/>
        <path d="M160 955 162 890Q175 850 200 850L340 827Q350 810 365 815L385 835 192 860Q176 890 174 957z" fill="#a0acb0"/>
        <ellipse cx="371" cy="861" rx="14" ry="29" fill="#b0bcc0"/><ellipse cx="363" cy="858" rx="14" ry="26" fill="#899497"/><ellipse cx="352" cy="856" rx="3" ry="7" fill="#6a767a"/>
        <rect x="68" y="992" width="76" height="48" rx="22" fill="#a7b3b6"/><path d="M70 1005Q72 992 90 992L125 997Q144 1000 144 1020L135 1008 100 1002z" fill="#667174"/>
      </g>
      <g transform="translate(860 530) scale(.33333)" fill="#8f9a9b">
        <!-- front plate -->
        <path d="M940 465 960 460V507L925 520 720 578 715 560z" fill="#859092"/>
        <path d="M660 200Q665 182 690 178L765 158Q820 160 860 163 880 180 910 178L950 150 948 133 1022 144 1037 165 1033 415 1018 445 958 465 940 500 728 569 670 558Q657 552 657 540z"/>
        <path d="M660 200Q665 182 690 178L750 182Q728 190 725 215L722 568 670 558Q657 552 657 540z" fill="url(#side)"/>
        <path d="M665 188 765 158Q830 160 862 165L745 190Q725 195 722 205z" fill="#96a2a5"/>
        <path d="M948 133 1022 144 1037 165 1028 165 1018 155 990 160 870 188 910 178 948 152z" fill="#99a5a8"/>
        <path d="M992 162 1018 155 1028 170V405L990 408z" fill="#7f8a8c"/>
        <path d="M990 408 1028 402 1033 415 1018 445 945 465 935 452z" fill="#a4b0b4"/>
        <path d="M992 162 1018 155 1030 170V410L1012 436 938 456" fill="none" stroke="#a5b1b4" stroke-width="3"/>
        <path d="M842 186 890 196 913 230 880 224z" fill="#5e686b"/>
        <path d="M790 516Q840 500 860 445 875 410 925 425 905 450 890 470 860 520 790 516z" fill="#a5b1b5"/>
        <ellipse cx="933" cy="303" rx="32" ry="58" fill="#77827f"/><ellipse cx="942" cy="303" rx="24" ry="46" fill="#8a9598"/><ellipse cx="920" cy="302" rx="19" ry="38" fill="#a9b5b9"/><ellipse cx="919" cy="300" rx="11" ry="30" fill="#fff"/>
        <path d="M925 243Q898 265 898 305T918 363" stroke="#727d80" fill="none" stroke-width="3"/>
        <ellipse cx="805" cy="342" rx="28" ry="54" fill="#6c777a"/><ellipse cx="808" cy="350" rx="24" ry="44" fill="#98a4a8"/>
        <path d="M815 292Q790 280 768 307 755 330 757 365 760 405 792 410 776 390 778 350 780 305 815 292z" fill="#7f8a8d"/>
        <path d="M785 322 880 338V388L785 375z" fill="url(#vert)"/><path d="M835 330q-8 25-2 54" stroke="#626d6f" fill="none" stroke-width="2"/>
        <ellipse cx="880" cy="361" rx="14" ry="26" fill="#b4c0c3"/><ellipse cx="882" cy="361" rx="10" ry="20" fill="#7d888b"/>
        <g fill="#667174"><ellipse cx="744" cy="224" rx="7" ry="12"/><ellipse cx="957" cy="183" rx="9" ry="13"/><ellipse cx="924" cy="209" rx="7" ry="12"/><ellipse cx="740" cy="537" rx="8" ry="12"/><ellipse cx="768" cy="480" rx="9" ry="14"/><ellipse cx="922" cy="440" rx="8" ry="13"/><ellipse cx="955" cy="422" rx="8" ry="13"/><ellipse cx="773" cy="243" rx="4" ry="9"/><ellipse cx="941" cy="190" rx="4" ry="12"/></g>
        <g fill="#a6b2b6"><ellipse cx="746" cy="227" rx="4" ry="7"/><ellipse cx="959" cy="186" rx="5" ry="8"/><ellipse cx="926" cy="212" rx="4" ry="7"/><ellipse cx="742" cy="541" rx="5" ry="7"/><ellipse cx="770" cy="484" rx="5" ry="8"/><ellipse cx="924" cy="443" rx="5" ry="8"/><ellipse cx="957" cy="425" rx="5" ry="8"/><path d="M748 460l22-3v12l-14 4z"/></g>
        <path d="M655 555v24M477 530v20" stroke="#626d70" stroke-width="4"/>
        <path d="M885 500q6-10 14-8v8z" fill="#69757a"/>
        <!-- model datum -->
        <g fill="none" stroke="#d3d7d8" stroke-width="3"><path d="M700 1072V930M700 1072 575 1048M700 1072 795 1042M632 1060V978L700 990 749 975V1056M632 1060 682 1045 749 1056"/></g>
        <path d="M702 912l-6 30h12zM566 1048l26-4v12zM797 1042l-24 4v10z" fill="#d6cfd0"/>
      </g>
      <g fill="#dfe2e3" font-family="Liberation Sans, sans-serif" font-size="9" letter-spacing="0"><text x="1091" y="832">Z</text><text x="1041" y="881">Y</text><text x="1125" y="879">X</text></g>
      <!-- view triad -->
      <path d="M352.500 935.500 371 931 391.500 934.500V962L375 967.500 352.500 963z" fill="#fff" stroke="#aaa" stroke-width=".8"/><path d="M352.500 935.500 375 939.500 391.500 934.500M375 939.500v28" fill="none" stroke="#aaa" stroke-width=".8"/>
      <path d="M370.500 935.500v-22h-2l3.800-11.500 3.200 11.500H374v22z" fill="#1240dc"/>
      <path d="M352 944v3l-9-1.500v2L333 942l10-2v2z" fill="#2e8f2e"/><path d="M392 941l4-1v-2l5 2.500-4 4.500-1-1-4 .5z" fill="#d63535"/>
      <g font-family="Liberation Sans, sans-serif" font-size="8" letter-spacing="0"><text x="370" y="898" fill="#5b74ee">Z</text><text x="324.500" y="944" fill="#4aa04a">Y</text><text x="401" y="942.500" fill="#e05555">X</text></g>
    </svg>
  </section>

  <aside class="tools d-flex flex-column pt-2">
    <svg viewBox="0 0 18 18" fill="none" stroke="#777"><circle cx="9" cy="9" r="8"/><circle cx="9" cy="9" r="4.500"/></svg>
    <svg viewBox="0 0 18 18" fill="none" stroke="#777"><circle cx="9" cy="9" r="8"/><path d="M7 5.500v7l5-3.500z"/></svg>
    <svg viewBox="0 0 24 24"><use href="#ext"/></svg>
    <svg viewBox="0 0 18 18" fill="#fff" stroke="#555"><path d="M1 14 14 1l3 2L4 17z"/><path d="M4 12l1 1M7 9l1 1M10 6l1 1M13 3l1 1"/></svg>
    <svg viewBox="0 0 18 18" stroke="#43b9da"><path d="M1 17 17 1"/></svg>
    <svg viewBox="0 0 18 18" fill="none" stroke="#43b9da" stroke-width="1.200"><path d="M1 4h16v10H1z"/></svg>
    <svg viewBox="0 0 24 24"><use href="#hole"/></svg>
    <svg viewBox="0 0 24 24"><use href="#part"/></svg>
    <svg viewBox="0 0 18 18" fill="none" stroke="#43b9da" stroke-width="1.200"><circle cx="9" cy="9" r="8"/></svg>
    <svg viewBox="0 0 24 24"><use href="#sk"/><path d="M10 22l-3-3 8-7q0-5 5-5l-2 4 2 2 4-2q0 5-5 5z" fill="#eee" stroke="#444"/></svg>
    <div class="border-top me-1"></div>
    <svg class="mt-auto mb-0 ms-1" viewBox="0 0 18 18"><path d="M6.500 7v7L3 10.500z" fill="#111"/></svg>
  </aside>
</main>

<script>
const tick='<svg width="11" height="9"><use href="#tick"/></svg>';
const plus=s=>`<svg width="9" height="9" viewBox="0 0 9 9" fill="none" class="gap2"><path d="M.5.5h8v8h-8z" stroke="#ddd"/><path d="M2 4.500h5${s?'M4.500 2v5':''}" stroke="#333"/></svg>`;
const row=(cls,name,c,u,bold)=>`<div class="trow${bold?' fw-bold text-dark':''}"><div class="nm ${cls}">${name}</div><div>${c}</div><div>${u?tick:''}</div><div></div></div>`;
let h=row('lv1',plus(1)+'<svg width="11" height="11" viewBox="0 0 11 11" fill="none" stroke="#555" class="gap1"><path d="M.5.5h10v10H.5zM0 2h11"/><path d="M3 7l2-2 3 2-2 2z" fill="#555"/></svg>Model Views','',0)
+row('lv1',plus(1)+tick+'<svg width="10" height="10" viewBox="0 0 10 10" class="gap1"><path d="M1 3l5-2 3 3-1 4-7 1z" fill="#a98" stroke="#555" stroke-width=".7"/><path d="M1 9V3l4-2" stroke="#ef7a1c" fill="none" stroke-width="1.500"/></svg>Cameras','',0)
+row('lv1',plus(0)+'<svg width="10" height="10" viewBox="0 0 10 10"><circle cx="5" cy="5" r="4.500" fill="#2fdc4c" stroke="#178a2c" stroke-width=".8"/><circle cx="4" cy="3.500" r="1.500" fill="#b9ffc4"/></svg><svg width="11" height="11" viewBox="0 0 11 11" class="gap1"><path d="M1 0v11M10 0v11" stroke="#aaa"/><path d="M2 1h5v5H2z" fill="#a77"/><path d="M4 4h5v5H4z" fill="#f08a1c"/></svg>Model History','',1);
const lead='<svg width="5" height="1"><path d="M0 .5h5" stroke="#ccc"/></svg><svg width="11" height="9"><use href="#eye"/></svg>';
h+=row('lv2',lead+'<svg width="11" height="10" viewBox="0 0 11 10" fill="none" stroke="#d9668c" class="gap2"><path d="M5.500 0v5M5.500 5 1 8.500M5.500 5 10 8.500M4 3.500h3L9 9H2z"/></svg>Datum Coordinate Syste...','',1);
for(let i=1;i<=20;i++)h+=row('lv2',lead+`<svg width="12" height="12" class="gap1"><use href="#body"/></svg>Convergent Body (${i})`,i==20?'<svg width="5" height="10" viewBox="0 0 5 10"><path d="M.5.5h4v9h-4zM0 3.500h5M0 6.500h5" fill="none" stroke="#666"/><path d="M2 4h3v2H2z" fill="#f08a1c"/></svg>':'',1,i==20);
for(let i=0;i<18;i++)h+=row('','','',0);
document.getElementById('tree').innerHTML=h;
</script>
<script src="https://cdn.jsdelivr.net/npm/bootstrap@5.3.0/dist/js/bootstrap.bundle.min.js"></script>
</body>
</html>
